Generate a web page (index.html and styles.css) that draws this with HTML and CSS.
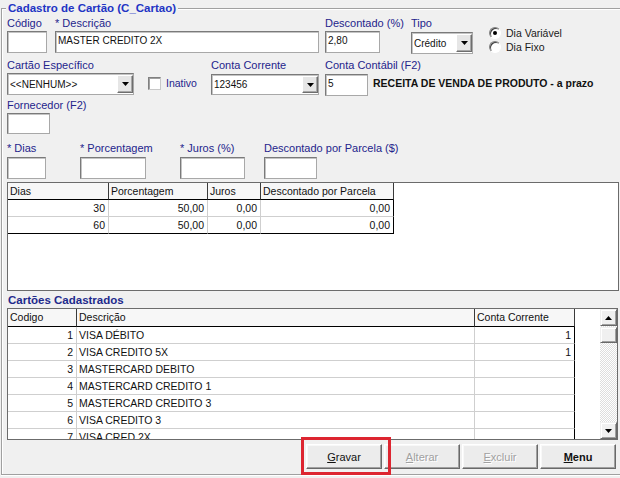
FILE: index.html
```html
<!DOCTYPE html>
<html lang="pt-BR">
<head>
<meta charset="utf-8">
<title>Cadastro de Cartão</title>
<link rel="stylesheet" href="styles.css">
</head>
<body>
<div class="group">
  <div class="legend">Cadastro de Cartão (C_Cartao)</div>

  <div class="row r1">
    <div class="field f-cod"><div class="lbl">Código</div><div class="edit"></div></div>
    <div class="field f-desc"><div class="lbl">* Descrição</div><div class="edit">MASTER CREDITO 2X</div></div>
    <div class="field f-pct"><div class="lbl">Descontado (%)</div><div class="edit">2,80</div></div>
    <div class="field f-tipo"><div class="lbl">Tipo</div>
      <div class="combo c-tipo"><span class="val">Crédito</span><span class="drop"><svg width="7" height="4" viewBox="0 0 7 4"><polygon points="0,0 7,0 3.5,4" fill="#000"/></svg></span></div>
    </div>
    <div class="radios">
      <div class="radio"><span class="rb on"></span><span>Dia Variável</span></div>
      <div class="radio"><span class="rb"></span><span>Dia Fixo</span></div>
    </div>
  </div>

  <div class="row r2">
    <div class="field f-esp"><div class="lbl">Cartão Específico</div>
      <div class="combo"><span class="val">&lt;&lt;NENHUM&gt;&gt;</span><span class="drop"><svg width="7" height="4" viewBox="0 0 7 4"><polygon points="0,0 7,0 3.5,4" fill="#000"/></svg></span></div>
    </div>
    <div class="check"><span class="chk"></span><span class="lbl-inline">Inativo</span></div>
    <div class="field f-cc"><div class="lbl">Conta Corrente</div>
      <div class="combo c-cc"><span class="val">123456</span><span class="drop"><svg width="7" height="4" viewBox="0 0 7 4"><polygon points="0,0 7,0 3.5,4" fill="#000"/></svg></span></div>
    </div>
    <div class="field f-ctb"><div class="lbl">Conta Contábil (F2)</div><div class="edit e-ctb">5</div></div>
    <div class="conta-desc">RECEITA DE VENDA DE PRODUTO - a prazo</div>
  </div>

  <div class="row r3">
    <div class="field f-forn"><div class="lbl">Fornecedor (F2)</div><div class="edit e-forn"></div></div>
  </div>

  <div class="row r4">
    <div class="field f-dias"><div class="lbl">* Dias</div><div class="edit"></div></div>
    <div class="field f-porc"><div class="lbl">* Porcentagem</div><div class="edit"></div></div>
    <div class="field f-juros"><div class="lbl">* Juros (%)</div><div class="edit"></div></div>
    <div class="field f-dpp"><div class="lbl">Descontado por Parcela ($)</div><div class="edit"></div></div>
  </div>

  <div class="grid g1">
    <div class="gr head">
      <div class="c">Dias</div><div class="c">Porcentagem</div><div class="c">Juros</div><div class="c last">Descontado por Parcela</div>
    </div>
    <div class="gr">
      <div class="c num">30</div><div class="c num">50,00</div><div class="c num">0,00</div><div class="c num last">0,00</div>
    </div>
    <div class="gr end">
      <div class="c num">60</div><div class="c num">50,00</div><div class="c num">0,00</div><div class="c num last">0,00</div>
    </div>
  </div>

  <div class="section">Cartões Cadastrados</div>

  <div class="grid g2">
    <div class="g2-main">
      <div class="gr head">
        <div class="c">Codigo</div><div class="c">Descrição</div><div class="c last">Conta Corrente</div>
      </div>
      <div class="gr"><div class="c num">1</div><div class="c">VISA DÉBITO</div><div class="c num last">1</div></div>
      <div class="gr"><div class="c num">2</div><div class="c">VISA CREDITO 5X</div><div class="c num last">1</div></div>
      <div class="gr"><div class="c num">3</div><div class="c">MASTERCARD DEBITO</div><div class="c num last"></div></div>
      <div class="gr"><div class="c num">4</div><div class="c">MASTERCARD CREDITO 1</div><div class="c num last"></div></div>
      <div class="gr"><div class="c num">5</div><div class="c">MASTERCARD CREDITO 3</div><div class="c num last"></div></div>
      <div class="gr"><div class="c num">6</div><div class="c">VISA CREDITO 3</div><div class="c num last"></div></div>
      <div class="gr"><div class="c num">7</div><div class="c">VISA CRED 2X</div><div class="c num last"></div></div>
    </div>
    <div class="sb">
      <div class="sb-btn"><svg width="7" height="4" viewBox="0 0 7 4"><polygon points="0,4 7,4 3.5,0" fill="#000"/></svg></div>
      <div class="sb-thumb"></div>
      <div class="sb-track"></div>
      <div class="sb-btn"><svg width="7" height="4" viewBox="0 0 7 4"><polygon points="0,0 7,0 3.5,4" fill="#000"/></svg></div>
    </div>
  </div>

  <div class="buttons">
    <div class="btn"><span><u>G</u>ravar</span></div>
    <div class="btn disabled"><span><u>A</u>lterar</span></div>
    <div class="btn disabled"><span><u>E</u>xcluir</span></div>
    <div class="btn bold"><span><u>M</u>enu</span></div>
  </div>
</div>
<div class="highlight"></div>
</body>
</html>
```

FILE: styles.css
```css
* { box-sizing: border-box; }
html, body { margin: 0; padding: 0; }
body {
  width: 620px;
  height: 478px;
  overflow: hidden;
  background: #f0f0f0;
  font-family: "Liberation Sans", Arial, sans-serif;
  font-size: 11px;
  color: #000;
}

.group {
  position: relative;
  margin: 8px 0 0 1px;
  width: 640px;
  height: 467px;
  border: 1px solid #a0a0a0;
  box-shadow: inset 1px 1px 0 #fff, 0 1px 0 #fff;
  padding: 8px 0 0 5px;
}
.legend {
  position: absolute;
  top: -8px;
  left: 4px;
  padding: 0 2px;
  background: #f0f0f0;
  font-weight: bold;
  font-size: 11.5px;
  line-height: 14px;
  color: #2234c4;
}

.row { display: flex; align-items: flex-start; }
.r2 { margin-top: 5px; }
.r3 { margin-top: 3px; }
.r4 { margin-top: 8px; }

.field { display: flex; flex-direction: column; flex: none; }
.lbl {
  height: 13px;
  line-height: 13px;
  margin-bottom: 1px;
  white-space: nowrap;
  color: #24248c;
}
.r4 .lbl { margin-bottom: 2px; }

.edit, .combo {
  width: 100%;
  height: 22px;
  background: #fff;
  border: 1px solid;
  border-color: #7a7a7a #a8a8a8 #a8a8a8 #7a7a7a;
  box-shadow: inset 1px 1px 0 #c4c4c4;
  font-size: 10px;
  line-height: 13px;
  padding: 2px 0 0 2px;
  white-space: nowrap;
  color: #111;
}

.f-cod { width: 40px; }
.f-desc { width: 264px; margin-left: 8px; }
.f-pct { width: 55px; margin-left: 6px; }
.f-tipo { width: 62px; margin-left: 31px; }
.f-tipo .combo { margin-top: 1px; }

.combo {
  display: flex;
  align-items: center;
  padding: 0 0 0 2px;
}
.combo .val { flex: 1; }
.drop {
  flex: none;
  align-self: stretch;
  width: 16px;
  margin: 1px 0;
  background: #e6e6e6;
  border: 1px solid;
  border-color: #fff #6e6e6e #6e6e6e #fff;
  box-shadow: inset -1px -1px 0 #a8a8a8;
  display: flex;
  align-items: center;
  justify-content: center;
}

.radios { margin: 9px 0 0 16px; }
.radio {
  display: flex;
  align-items: center;
  height: 14px;
  font-size: 10.5px;
  color: #1a1a1a;
}
.rb {
  position: relative;
  width: 12px;
  height: 12px;
  margin-right: 5px;
  border-radius: 50%;
  background: #fff;
  border: 1px solid;
  border-color: #808080 #fff #fff #808080;
  box-shadow: inset 1px 1px 0 #404040;
}
.rb.on::after {
  content: "";
  position: absolute;
  left: 3px;
  top: 3px;
  width: 4px;
  height: 4px;
  border-radius: 50%;
  background: #000;
}

.f-esp { width: 127px; }
.check {
  flex: none;
  width: 63px;
  margin-left: 14px;
  padding-top: 18px;
  display: flex;
  align-items: center;
}
.chk {
  width: 13px;
  height: 13px;
  margin-right: 5px;
  background: #fff;
  border: 1px solid;
  border-color: #808080 #c8c8c8 #c8c8c8 #808080;
  box-shadow: inset 1px 1px 0 #a0a0a0;
}
.lbl-inline { color: #24248c; font-size: 10.5px; line-height: 13px; }
.f-cc { width: 108px; }
.f-cc .combo { margin-top: 1px; height: 21px; }
.f-ctb { width: 43px; margin-left: 6px; }
.e-ctb { margin-top: 1px; }
.conta-desc {
  margin-left: 5px;
  padding-top: 18px;
  font-weight: bold;
  font-size: 10.5px;
  line-height: 13px;
  white-space: nowrap;
  color: #111;
}

.f-forn { width: 43px; }
.e-forn { height: 21px; }

.f-dias { width: 39px; }
.f-porc { width: 66px; margin-left: 34px; }
.f-juros { width: 65px; margin-left: 34px; }
.f-dpp { width: 53px; margin-left: 19px; }

.grid {
  background: #fff;
  border: 1px solid #6b6b6b;
  overflow: hidden;
  font-size: 10.5px;
  color: #111;
}
.g1 { width: 612px; height: 109px; margin-top: 3px; }
.gr { display: grid; }
.g1 .gr { grid-template-columns: 101px 99px 53px 133px; }
.c {
  height: 17px;
  line-height: 16px;
  padding: 0 3px 0 2px;
  white-space: nowrap;
  overflow: hidden;
  border-right: 1px solid #cfcfcf;
  border-bottom: 1px solid #cfcfcf;
}
.c.num { text-align: right; }
.c.last { border-right-color: #000; }
.head .c {
  background: #f7f7f7;
  border-right-color: #3a3a3a;
  border-bottom-color: #000;
}
.end .c { border-bottom-color: #000; }

.section {
  margin-top: 2px;
  height: 14px;
  line-height: 14px;
  font-weight: bold;
  font-size: 11.5px;
  color: #1e2a8c;
  padding-left: 1px;
}

.g2 { display: flex; width: 611px; height: 132px; margin-top: 1px; }
.g2-main { flex: 1; overflow: hidden; }
.g2 .gr { grid-template-columns: 69px 398px 100px; }
.g2 .head .c { height: 18px; line-height: 17px; }

.sb {
  flex: none;
  width: 17px;
  display: flex;
  flex-direction: column;
  background: repeating-conic-gradient(#ffffff 0 25%, #dedede 0 50%) 0 0 / 2px 2px;
}
.sb-btn, .sb-thumb {
  flex: none;
  height: 17px;
  background: #f0f0f0;
  border: 1px solid;
  border-color: #f0f0f0 #696969 #696969 #f0f0f0;
  box-shadow: inset 1px 1px 0 #fff, inset -1px -1px 0 #a0a0a0;
  display: flex;
  align-items: center;
  justify-content: center;
}
.sb-thumb { margin-top: 1px; height: 16px; }
.sb-track { flex: 1; }

.buttons {
  display: flex;
  gap: 2px;
  margin: 4px 0 0 299px;
}
.btn {
  width: 76px;
  height: 25px;
  background: #ececec;
  border: 1px solid;
  border-color: #ffffff #696969 #696969 #ffffff;
  box-shadow: inset -1px -1px 0 #a0a0a0, inset 1px 1px 0 #f8f8f8;
  display: flex;
  align-items: center;
  justify-content: center;
  font-size: 11px;
  color: #111;
}
.btn.disabled { color: #a0a0a0; text-shadow: 1px 1px 0 #fff; }
.btn.bold { font-weight: bold; }

.highlight {
  position: absolute;
  left: 301px;
  top: 437px;
  width: 90px;
  height: 38px;
  border: 3px solid #dd2530;
}
```
